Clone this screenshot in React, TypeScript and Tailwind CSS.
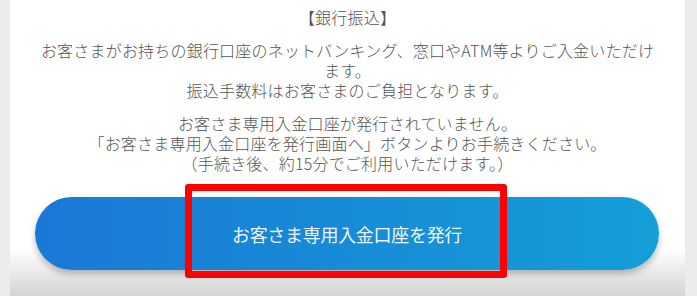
import React from 'react';

const App: React.FC = () => {
    return (
        <div className="w-[697px] h-[296px] bg-[#ececec] flex overflow-hidden" style={{ fontFamily: '"Noto Sans CJK JP", "Noto Sans", sans-serif' }}>
            <div className="ml-[10px] w-[675px] h-full bg-[linear-gradient(to_bottom,#ffffff_0%,#ffffff_84%,#d4d4d4_100%)] flex flex-col items-center text-[#555555] text-[16px] leading-[20px] font-light tracking-[0.2px]">
                {/* notice text */}
                <p className="mt-[7px]">【銀行振込】</p>
                <div className="mt-[13px] text-center">
                    <p>お客さまがお持ちの銀行口座のネットバンキング、窓口やATM等よりご入金いただけ</p>
                    <p>ます。</p>
                    <p>振込手数料はお客さまのご負担となります。</p>
                </div>
                <div className="mt-[13px] text-center">
                    <p>お客さま専用入金口座が発行されていません。</p>
                    <p>「お客さま専用入金口座を発行画面へ」ボタンよりお手続きください。</p>
                    <p>（手続き後、約15分でご利用いただけます。）</p>
                </div>

                {/* button */}
                <div className="relative mt-[24px] self-start ml-[25px] w-[624px]">
                    <button className="w-full h-[73px] rounded-full bg-[linear-gradient(to_right,#1b78d6,#149fd8)] shadow-[0_4px_6px_rgba(0,0,0,0.25)] text-white/95 text-[18px] font-normal tracking-[-0.3px]">
                        お客さま専用入金口座を発行
                    </button>
                    <div className="absolute left-[150px] top-[-13px] w-[322px] h-[94px] border-[7px] border-[#ff0000] rounded-[3px]" />
                </div>
            </div>
        </div>
    );
};

export default App;
